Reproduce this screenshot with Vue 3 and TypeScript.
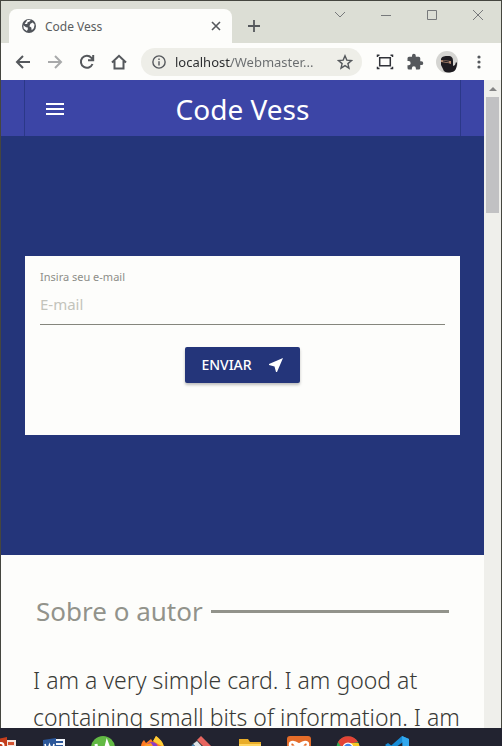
<script setup lang="ts">
import { ref } from 'vue'

const address = ref('localhost/Webmaster...')
const email = ref('')
</script>

<template>
  <div class="desktop">
    <div class="window">
      <header class="tabs">
        <div class="tab">
          <svg class="globe" viewBox="0 0 16 16" aria-hidden="true">
            <circle cx="8" cy="8" r="7" fill="#50545a" />
            <path d="M2.3 7.2 5 9.2l1.8.4v1.8l-1 1.6-3-2.2zM6.3 2l3.5-.2L8.6 3.6l-2 .6-.4 1.8-2.6-.1zM9.4 5.8l2.4-1.4 1.8 2.3-.8 3.5-2.1 2.1-.4-2.8-1.9-1.3z" fill="#fdfdfd" />
          </svg>
          <span class="tab-title">Code Vess</span>
          <button class="plain" aria-label="Close tab">
            <svg viewBox="0 0 12 12" width="12" height="12"><path d="m2 2 8 8m0-8-8 8" stroke="#55585c" stroke-width="1.6" /></svg>
          </button>
        </div>
        <button class="plain new-tab" aria-label="New tab">
          <svg viewBox="0 0 14 14" width="14" height="14"><path d="M7 1v12M1 7h12" stroke="#55585c" stroke-width="1.8" /></svg>
        </button>
        <div class="window-buttons">
          <button class="plain" aria-label="Search tabs"><svg viewBox="0 0 12 12"><path d="m1 3 5 5 5-5" /></svg></button>
          <button class="plain" aria-label="Minimize"><svg viewBox="0 0 12 12"><path d="M1 6.5h10" /></svg></button>
          <button class="plain" aria-label="Maximize"><svg viewBox="0 0 12 12"><path d="M1.5 1.5h9v9h-9z" /></svg></button>
          <button class="plain" aria-label="Close"><svg viewBox="0 0 12 12"><path d="m1 1 10 10m0-10L1 11" /></svg></button>
        </div>
      </header>

      <div class="toolbar">
        <div class="nav-buttons">
          <button class="plain" aria-label="Back"><svg viewBox="0 0 16 16"><path d="M15 8H2m6-6L2 8l6 6" /></svg></button>
          <button class="plain faded" aria-label="Forward"><svg viewBox="0 0 16 16"><path d="M1 8h13M8 2l6 6-6 6" /></svg></button>
          <button class="plain" aria-label="Reload"><svg viewBox="0 0 16 16"><path d="M13.5 10A6 6 0 1 1 12.4 3.8L14 5.5M14.2 1v5.2H9" /></svg></button>
          <button class="plain" aria-label="Home"><svg viewBox="0 0 16 16"><path d="M1 8.5 8 1.8l7 6.7M3.5 7v7.5h9V7" /></svg></button>
        </div>
        <div class="address">
          <svg viewBox="0 0 16 16" width="14" height="14" fill="none" stroke="#55585c" stroke-width="1.6"><circle cx="8" cy="8" r="7" /><path d="M8 7v5M8 4v1.8" /></svg>
          <input v-model="address" type="text" aria-label="Address" />
          <button class="plain" aria-label="Bookmark">
            <svg viewBox="0 0 16 16" width="16" height="16" fill="none" stroke="#55585c" stroke-width="1.4"><path d="m8 1.8 1.8 4.3 4.7.4-3.6 3.1 1.1 4.6L8 11.7l-4 2.5 1.1-4.6-3.6-3.1 4.7-.4z" /></svg>
          </button>
        </div>
        <div class="extensions">
          <button class="plain" aria-label="Capture">
            <svg viewBox="0 0 18 18" width="18" height="18" fill="none" stroke="#303238" stroke-width="1.5"><path d="M3.700 4.800h10.600v8H3.700zM1.500 4V2.200h2M14.500 2.200h2V4M1.500 13.800v1.800h2M14.500 15.600h2v-1.800" /></svg>
          </button>
          <button class="plain" aria-label="Extensions">
            <svg viewBox="0 0 24 24" width="18" height="18" fill="#55585c"><path d="M20.5 11H19V7a2 2 0 0 0-2-2h-4V3.500a2.500 2.500 0 0 0-5 0V5H4a2 2 0 0 0-2 2v3.800h1.500a2.700 2.700 0 0 1 0 5.400H2V20a2 2 0 0 0 2 2h3.800v-1.500a2.700 2.700 0 0 1 5.400 0V22H17a2 2 0 0 0 2-2v-4h1.500a2.500 2.500 0 0 0 0-5z" /></svg>
          </button>
          <button class="plain" aria-label="Profile">
            <svg viewBox="0 0 22 22" width="22" height="22"><circle cx="11" cy="11" r="11" fill="#d5d5d2" /><path d="M5 8c1-3 4-3 7-3 4 0 5 2 5 5v5l2-1 1-3 1 1c0 5-2 9-5 9-4 1-8 1-9-3l-2-4z" fill="#1d1b20" /><path d="m5 9 10 1v3l-3-1-7-1z" fill="#b58c74" /><path d="m7 10 6 1" stroke="#1d1b20" /></svg>
          </button>
          <button class="plain menu" aria-label="Menu">
            <svg viewBox="0 0 6 16" width="6" height="16" fill="#55585c"><circle cx="3" cy="3" r="1.6" /><circle cx="3" cy="8" r="1.6" /><circle cx="3" cy="13" r="1.6" /></svg>
          </button>
        </div>
      </div>

      <div class="viewport">
        <main class="page">
          <nav class="navbar">
            <div class="navbar-inner">
              <button class="plain" aria-label="Abrir menu">
                <svg viewBox="0 0 20 14" width="20" height="14"><path d="M1 2h18M1 7h18M1 12h18" stroke="#fff" stroke-width="2" /></svg>
              </button>
              <a class="brand" href="#">Code Vess</a>
            </div>
          </nav>
          <section class="hero">
            <form class="card" @submit.prevent>
              <label for="email">Insira seu e-mail</label>
              <input id="email" v-model="email" type="email" placeholder="E-mail" />
              <button class="send" type="submit">
                <span>ENVIAR</span>
                <svg viewBox="0 0 16 16" width="16" height="16"><path d="M15 1 1 7v1l5.500 1.500L8 15h1z" fill="#fff" /></svg>
              </button>
            </form>
          </section>
          <section class="about">
            <h2>Sobre o autor</h2>
            <p>I am a very simple card. I am good at containing small bits of information. I am</p>
          </section>
        </main>
        <div class="scrollbar">
          <svg viewBox="0 0 8 4" width="8" height="4"><path d="M4 0 8 4H0z" fill="#858585" /></svg>
          <div class="thumb"></div>
        </div>
      </div>
    </div>

    <footer class="taskbar">
      <svg viewBox="0 0 24 24"><path d="M0 4 14 1v21L0 20z" fill="#c43e1c" /><path d="M14 4h9v17h-9z" fill="#f4e5df" /><path d="M15 6h6v3h-6zm0 5h6v2h-6z" fill="#d35230" /><path d="M5 16V7h3a2 2 0 0 1 0 5H5" fill="none" stroke="#fff" stroke-width="2" /></svg>
      <svg viewBox="0 0 24 24"><path d="M10 3h13v18H10z" fill="#f3f6fb" /><path d="M14 6h7m-7 4h7m-7 4h7" stroke="#2b579a" stroke-width="2" /><path d="M1 4 14 2v20L1 20z" fill="#2b579a" /><path d="m3 8 2 8 2.500-7L10 16l2-8" fill="none" stroke="#fff" stroke-width="1.6" /></svg>
      <svg viewBox="0 0 24 24"><circle cx="12" cy="12" r="12" fill="#62b944" /><path d="M5 8c1 9 8 9 10 3l1-4 3 8" fill="none" stroke="#fff" stroke-width="3" /></svg>
      <svg viewBox="0 0 24 24"><path d="M1 11c0-3 1-5 3-7l2 3 5-4 2 3 3-6c5 4 8 8 8 13a11 11 0 0 1-23-2z" fill="#ff7a22" /><path d="m13 5 3-5c5 4 7 6 8 11l-6-3z" fill="#ffcd35" /><circle cx="12" cy="12" r="6" fill="#8b3cc8" /><path d="m4 9 7-2 2 3-5 3z" fill="#ff9b28" /></svg>
      <svg viewBox="0 0 24 24"><path d="m2 9 10-9 12 12-12 12L0 12z" fill="#33373c" /><path d="m8 4 4-4 11 11-4 4z" fill="#e7655f" /><path d="m4 8 4-3 10 11-3 3z" fill="#dce3e7" /><path d="m1 12 3-4 10 11-2 4z" fill="#4389bd" /></svg>
      <svg viewBox="0 0 24 24"><path d="M1 3h9l2 3h11v15H1z" fill="#e9ad29" /><path d="M1 8h22v13H1z" fill="#ffd663" /></svg>
      <svg viewBox="0 0 24 24"><rect width="24" height="24" rx="3" fill="#e56c29" /><path d="m6 6 12 12M18 6 6 18M6 6c-4 0-4 5 0 5s8-5 12-5 4 5 0 5-8-5-12-5" fill="none" stroke="#fff" stroke-width="2.5" /></svg>
      <svg viewBox="0 0 24 24"><circle cx="12" cy="12" r="11.500" fill="#2da850" /><path d="M2 6a11.500 11.500 0 0 1 20 0l-10 2-4 7z" fill="#e44336" /><path d="M12 7h10.500A11.500 11.500 0 0 1 12 23.500l5-9z" fill="#f8c927" /><circle cx="12" cy="12" r="5.500" fill="#fff" /><circle cx="12" cy="12" r="4.300" fill="#4384e8" /></svg>
      <svg viewBox="0 0 24 24"><path d="m17 0 7 3v18l-7 3L0 9l3-2 15 11V6L3 17l-3-2z" fill="#178bd5" /><path d="m17 0 7 3v18l-6 3z" fill="#32a8ee" /></svg>
    </footer>
  </div>
</template>

<style>
body {
  margin: 0;
  overflow: hidden;
}
</style>

<style scoped>
.desktop,
.desktop * {
  box-sizing: border-box;
}

.desktop {
  display: flex;
  flex-direction: column;
  height: 100vh;
  background: #222330;
  font-family: "Noto Sans", "Open Sans", sans-serif;
}

.window {
  display: flex;
  flex: 1;
  flex-direction: column;
  min-height: 0;
  border: 1px solid #45463f;
  border-bottom: 0;
  background: #fdfdfb;
}

.plain {
  display: flex;
  align-items: center;
  justify-content: center;
  padding: 0;
  border: 0;
  background: none;
}

.tabs {
  display: flex;
  align-items: flex-end;
  height: 42px;
  padding-left: 8px;
  background: #dcded5;
}

.tab {
  display: flex;
  align-items: center;
  width: 223px;
  height: 34px;
  padding: 0 10px 0 12px;
  border-radius: 8px 8px 0 0;
  background: #fdfdfb;
}

.globe {
  width: 16px;
  height: 16px;
}

.tab-title {
  flex: 1;
  margin-left: 8px;
  color: #5b5e60;
  font-size: 12px;
}

.new-tab {
  align-self: center;
  margin: 8px 0 0 15px;
}

.window-buttons {
  display: flex;
  align-self: flex-start;
  margin: 8px 17px 0 auto;
  gap: 34px;
}

.window-buttons svg {
  width: 12px;
  height: 12px;
  fill: none;
  stroke: #77797b;
}

.toolbar {
  display: flex;
  align-items: center;
  height: 37px;
  padding: 0 13px 0 14px;
  background: #fdfdfb;
}

.nav-buttons {
  display: flex;
  gap: 16px;
}

.nav-buttons svg {
  width: 16px;
  height: 16px;
  fill: none;
  stroke: #55585c;
  stroke-width: 2;
}

.nav-buttons .faded {
  opacity: 0.5;
}

.address {
  display: flex;
  flex: 1;
  align-items: center;
  min-width: 0;
  height: 28px;
  margin-left: 14px;
  padding: 0 9px 0 11px;
  gap: 9px;
  border-radius: 14px;
  background: #eeeee8;
}

.address input {
  flex: 1;
  min-width: 0;
  padding: 0;
  border: 0;
  background: linear-gradient(90deg, #292b2d 56px, #696c6e 56px);
  background-clip: text;
  color: transparent;
  font: 13px/20px "Noto Sans", sans-serif;
}

.extensions {
  display: flex;
  align-items: center;
  margin-left: 14px;
  gap: 12px;
}

.menu {
  width: 18px;
}

.viewport {
  display: flex;
  flex: 1;
  min-height: 0;
}

.page {
  flex: 1;
  min-width: 0;
  overflow: hidden;
  background: #fdfdfb;
}

.navbar {
  height: 56px;
  padding: 0 23px;
  background: #3c45a6;
}

.navbar-inner {
  display: grid;
  grid-template-columns: 1fr auto 1fr;
  align-items: center;
  height: 100%;
  padding: 0 20px;
  border: solid #2b3888;
  border-width: 0 1px;
}

.navbar-inner .plain {
  justify-self: start;
}

.brand {
  color: #fff;
  font-size: 28px;
  line-height: 58px;
  text-decoration: none;
}

.hero {
  padding: 120px 24px;
  background: #24357a;
}

.card {
  display: flex;
  flex-direction: column;
  height: 179px;
  padding: 12px 15px;
  background: #fdfdfb;
}

.card label {
  color: #8d8e89;
  font-size: 11px;
  line-height: 18px;
}

.card input {
  height: 39px;
  padding: 0 0 2px;
  border: 0;
  border-bottom: 1px solid #85867d;
  background: none;
  color: #444;
  font: 15px/20px "Noto Sans", sans-serif;
}

.card input::placeholder {
  color: #c3c4bc;
  opacity: 1;
}

.send {
  display: flex;
  align-items: center;
  align-self: center;
  height: 36px;
  margin-top: 22px;
  padding: 0 16px;
  gap: 16px;
  border: 0;
  border-radius: 2px;
  background: #24357a;
  box-shadow: 0 2px 3px #00000040;
  color: #fff;
  font: 500 14px/20px "Noto Sans", sans-serif;
}

.about {
  padding: 36px 24px 0 32px;
}

.about h2 {
  display: flex;
  align-items: center;
  margin: 0 11px 0 3px;
  gap: 8px;
  color: #92938b;
  font-size: 26px;
  font-weight: 400;
  line-height: 40px;
}

.about h2::after {
  flex: 1;
  height: 3px;
  background: #92938b;
  content: "";
}

.about p {
  margin: 31px 0 0;
  color: #393a36;
  font-size: 23px;
  font-weight: 300;
  line-height: 37px;
}

.scrollbar {
  display: flex;
  flex-direction: column;
  align-items: center;
  width: 17px;
  padding: 7px 2px 0;
  gap: 6px;
  background: #efefeb;
}

.thumb {
  width: 100%;
  height: 116px;
  background: #c1c1c3;
}

.taskbar {
  display: flex;
  height: 18px;
  margin-left: -7px;
  padding-top: 8px;
  gap: 25px;
  overflow: hidden;
}

.taskbar svg {
  flex: none;
  width: 24px;
  height: 24px;
}
</style>
